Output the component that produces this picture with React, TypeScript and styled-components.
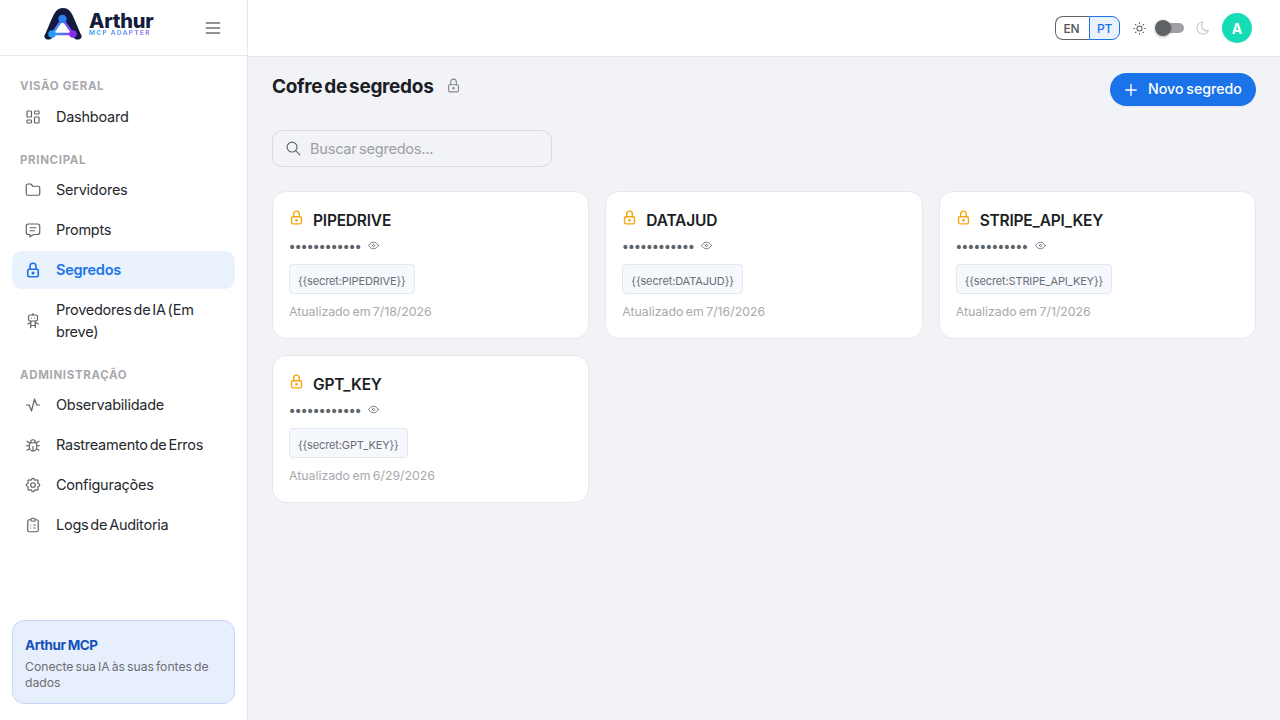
import React from "react";
import styled, { createGlobalStyle } from "styled-components";
import {
  TbLayoutDashboard, TbFolder, TbMessage, TbLock, TbRobot, TbActivity, TbBug,
  TbSettings, TbClipboardList, TbMenu2, TbSun, TbMoon, TbSearch, TbPlus, TbEye,
} from "react-icons/tb";

const Global = createGlobalStyle`
  html, body { margin: 0; padding: 0; height: 100%; }
  body { font-family: Inter, "Open Sans", sans-serif; background: #f1f3f6; color: #1d2129; overflow: hidden; }
  * { box-sizing: border-box; }
`;

const Shell = styled.div`
  display: grid;
  grid-template-columns: 248px 1fr;
  height: 720px;
`;
const Sidebar = styled.aside`
  display: flex;
  flex-direction: column;
  background: #fff;
  border-right: 1px solid #e6e8ec;
  height: 720px;
`;
const Brand = styled.div`
  display: flex;
  align-items: center;
  height: 56px;
  flex: none;
  padding: 0 24px 0 44px;
  border-bottom: 1px solid #e6e8ec;
  justify-content: space-between;
`;
const LogoWrap = styled.div`
  display: flex;
  align-items: center;
  gap: 7px;
  margin-top: -7px;
`;
const LogoText = styled.div`
  display: flex;
  flex-direction: column;
`;
const LogoName = styled.span`
  font-size: 20px;
  font-weight: 800;
  line-height: 16px;
  color: #141b3c;
  letter-spacing: -0.2px;
`;
const LogoSub = styled.span`
  font-size: 6.5px;
  font-weight: 700;
  line-height: 6px;
  margin-top: 1px;
  letter-spacing: 1.3px;
  background: linear-gradient(90deg, #38a4f5, #9a6cf5);
  -webkit-background-clip: text;
  background-clip: text;
  color: transparent;
`;
const MenuBtn = styled.span`
  display: flex;
  color: #6b6f76;
  font-size: 20px;
  svg { stroke-width: 1.75; }
`;
const Nav = styled.nav`
  display: flex;
  flex-direction: column;
  padding: 0 12px;
  flex: 1;
`;
const SectionLabel = styled.div<{ $first?: boolean }>`
  font-size: 11.5px;
  font-weight: 700;
  letter-spacing: 0.65px;
  color: #a8a9ad;
  text-transform: uppercase;
  line-height: 14px;
  padding-left: 8px;
  margin: ${(p) => (p.$first ? "23px 0 5px" : "15px 0 4px")};
`;
const NavItem = styled.div<{ $active?: boolean }>`
  display: flex;
  align-items: center;
  gap: 14px;
  min-height: 38px;
  padding: 8px 12px;
  margin-bottom: 2px;
  border-radius: 10px;
  font-size: 14.5px;
  line-height: 22px;
  font-weight: ${(p) => (p.$active ? 600 : 400)};
  letter-spacing: -0.25px;
  word-spacing: -1.9px;
  color: ${(p) => (p.$active ? "#1a73e8" : "#25282e")};
  background: ${(p) => (p.$active ? "#e9f2fd" : "transparent")};
`;
const NavIcon = styled.span<{ $active?: boolean }>`
  display: flex;
  flex: none;
  font-size: 18px;
  color: ${(p) => (p.$active ? "#1a73e8" : "#5f6368")};
  svg { stroke-width: ${(p) => (p.$active ? 2.2 : 1.6)}; }
`;
const Promo = styled.div`
  margin: 0 12px 16px;
  height: 84px;
  padding: 14px 12px;
  border: 1px solid #c6d7f8;
  border-radius: 12px;
  background: #e8effc;
`;
const PromoTitle = styled.div`
  font-size: 13.5px;
  font-weight: 700;
  line-height: 20px;
  letter-spacing: -0.45px;
  word-spacing: -0.5px;
  color: #1452b8;
`;
const PromoText = styled.div`
  font-size: 12.2px;
  line-height: 16px;
  margin-top: 4px;
  word-spacing: -1.4px;
  color: #6b6e75;
`;
const Main = styled.main`
  display: flex;
  flex-direction: column;
  min-width: 0;
`;
const Topbar = styled.header`
  display: flex;
  align-items: center;
  justify-content: flex-end;
  height: 57px;
  flex: none;
  padding: 0 28px 0 0;
  background: #fff;
  border-bottom: 1px solid #e6e8ec;
`;
const LangGroup = styled.div`
  display: flex;
  height: 24px;
`;
const LangBtn = styled.span<{ $active?: boolean }>`
  display: flex;
  align-items: center;
  justify-content: center;
  width: ${(p) => (p.$active ? "31px" : "34px")};
  font-size: 12px;
  font-weight: 500;
  letter-spacing: -0.2px;
  padding-right: ${(p) => (p.$active ? "0" : "2px")};
  color: ${(p) => (p.$active ? "#1a73e8" : "#4f5359")};
  background: ${(p) => (p.$active ? "#e9f2fd" : "#fff")};
  border: 1px solid ${(p) => (p.$active ? "#1a73e8" : "#5f6368")};
  border-right-width: ${(p) => (p.$active ? "1px" : "0")};
  border-radius: ${(p) => (p.$active ? "0 8px 8px 0" : "8px 0 0 8px")};
`;
const ThemeIcon = styled.span<{ $dim?: boolean }>`
  display: flex;
  font-size: ${(p) => (p.$dim ? "16px" : "15px")};
  color: ${(p) => (p.$dim ? "#c9cbce" : "#5f6368")};
  svg { stroke-width: 1.75; }
`;
const ThemeRow = styled.div`
  display: flex;
  align-items: center;
  margin-left: 12px;
`;
const Switch = styled.span`
  position: relative;
  display: block;
  width: 21px;
  height: 10px;
  margin: 0 11px 0 16px;
  border-radius: 5px;
  background: #a0a1a4;
`;
const Thumb = styled.span`
  position: absolute;
  left: -8px;
  top: -3px;
  width: 16px;
  height: 16px;
  border-radius: 50%;
  background: #5f6368;
  box-shadow: 0 1px 3px rgba(0,0,0,0.3);
`;
const Avatar = styled.span`
  display: flex;
  align-items: center;
  justify-content: center;
  width: 30px;
  height: 30px;
  margin-left: 11px;
  border-radius: 50%;
  background: #14dcb4;
  color: #fff;
  font-size: 14px;
  font-weight: 700;
`;
const Content = styled.div`
  padding: 16px 24px;
  display: flex;
  flex-direction: column;
`;
const PageHead = styled.div`
  display: flex;
  justify-content: space-between;
  align-items: flex-start;
  height: 33px;
`;
const TitleRow = styled.div`
  display: flex;
  align-items: center;
  gap: 12px;
  height: 26px;
`;
const Title = styled.h1`
  margin: 0;
  padding-top: 2px;
  font-size: 19px;
  font-weight: 700;
  line-height: 26px;
  letter-spacing: -0.3px;
  word-spacing: -2.2px;
  color: #1b1e24;
`;
const TitleIcon = styled.span`
  display: flex;
  font-size: 17px;
  margin-top: -1px;
  color: #85888e;
  svg { stroke-width: 1.6; }
`;
const NewBtn = styled.button`
  display: flex;
  align-items: center;
  gap: 8px;
  height: 33px;
  width: 146px;
  padding: 0 0 2px 12px;
  border: 0;
  border-radius: 17px;
  background: #1a73e8;
  color: #fff;
  font-family: inherit;
  font-size: 14.2px;
  font-weight: 500;
  white-space: nowrap;
  word-spacing: -1px;
  box-shadow: 0 1px 2px rgba(0,0,0,0.06);
  svg { stroke-width: 1.9; margin-top: 2px; }
`;
const SearchBox = styled.div`
  display: flex;
  align-items: center;
  gap: 8px;
  width: 280px;
  height: 37px;
  margin-top: 24px;
  padding: 0 12px;
  border: 1px solid #d8dadf;
  border-radius: 10px;
  font-size: 14.6px;
  letter-spacing: -0.25px;
  word-spacing: -1.4px;
  color: #9d9fa4;
`;
const SearchIcon = styled.span`
  display: flex;
  font-size: 17px;
  color: #5f6368;
  svg { stroke-width: 1.6; }
`;
const CardGrid = styled.div`
  display: grid;
  grid-template-columns: repeat(3, 1fr);
  gap: 16px;
  margin-top: 24px;
`;
const Card = styled.article`
  height: 148px;
  padding: 16px;
  background: #fff;
  border: 1px solid #e6e8ec;
  border-radius: 14px;
`;
const CardHead = styled.div`
  display: flex;
  align-items: flex-start;
  gap: 8px;
  height: 28px;
`;
const LockIcon = styled.span`
  display: flex;
  font-size: 17px;
  margin: 1px 0 0 -1px;
  color: #f5a70f;
  svg { stroke-width: 2; }
`;
const CardName = styled.div`
  font-size: 15.5px;
  font-weight: 600;
  line-height: 24px;
  margin-top: 1px;
  letter-spacing: -0.2px;
  color: #1b1e24;
`;
const MaskRow = styled.div`
  display: flex;
  align-items: center;
  gap: 6px;
  height: 22px;
`;
const Mask = styled.span`
  font-size: 14px;
  letter-spacing: -2.26px;
  color: #5f6368;
  font-family: "DejaVu Sans", sans-serif;
  line-height: 22px;
  margin: 0 1px 0 -1px;
`;
const EyeIcon = styled.span`
  display: flex;
  font-size: 13px;
  margin-top: -3px;
  color: #5f6368;
  svg { stroke-width: 1.5; }
`;
const Token = styled.span`
  display: inline-flex;
  align-items: flex-end;
  height: 30px;
  margin-top: 6px;
  padding: 0 8px 4px;
  border: 1px solid #e3e7ee;
  border-radius: 4px;
  background: #f5f8fc;
  font-size: 11px;
  letter-spacing: -0.13px;
  line-height: 15px;
  color: #6b6e75;
`;
const Updated = styled.div`
  margin-top: 9px;
  font-size: 12.3px;
  line-height: 18px;
  word-spacing: -1px;
  color: #a8a9ad;
`;

function Logo() {
  return (
    <svg width="38" height="32" viewBox="0 0 38 32" aria-hidden="true">
      <defs>
        <linearGradient id="lg" x1="0" y1="0" x2="1" y2="0">
          <stop offset="0" stopColor="#2f9df5" />
          <stop offset="1" stopColor="#8a3df0" />
        </linearGradient>
      </defs>
      <path d="M0.5 27.5 C4 21 7 11 11 4.5 C13 1.2 16 0 19 0 C22 0 25 1.2 27 4.5 C31 11 34 21 37.5 27.5 C38.5 31 34 32.5 31 31 C29 29.5 29 27 28 26 L10 26 C9 27 9 29.5 7 31 C4 32.5 -0.5 31 0.5 27.5Z" fill="#121a3f" />
      <path d="M18.5 11 L8 26 L29 26 Z" fill="#fff" stroke="url(#lg)" strokeWidth="2.4" strokeLinejoin="round" />
      <circle cx="18.5" cy="11" r="4.2" fill="#2d7ff0" />
      <circle cx="8" cy="26" r="3.8" fill="#2a9cf5" />
      <circle cx="29" cy="26" r="3.8" fill="#8a2cf0" />
    </svg>
  );
}

const secrets = [
  { name: "PIPEDRIVE", date: "7/18/2026" },
  { name: "DATAJUD", date: "7/16/2026" },
  { name: "STRIPE_API_KEY", date: "7/1/2026" },
  { name: "GPT_KEY", date: "6/29/2026" },
];

export default function App() {
  return (
    <Shell>
      <Global />
      <Sidebar>
        <Brand>
          <LogoWrap>
            <Logo />
            <LogoText>
              <LogoName>Arthur</LogoName>
              <LogoSub>MCP ADAPTER</LogoSub>
            </LogoText>
          </LogoWrap>
          <MenuBtn><TbMenu2 /></MenuBtn>
        </Brand>
        <Nav>
          <SectionLabel $first>Visão geral</SectionLabel>
          <NavItem><NavIcon><TbLayoutDashboard /></NavIcon>Dashboard</NavItem>
          <SectionLabel>Principal</SectionLabel>
          <NavItem><NavIcon><TbFolder /></NavIcon>Servidores</NavItem>
          <NavItem><NavIcon><TbMessage /></NavIcon>Prompts</NavItem>
          <NavItem $active><NavIcon $active><TbLock /></NavIcon>Segredos</NavItem>
          <NavItem><NavIcon><TbRobot /></NavIcon>Provedores de IA (Em breve)</NavItem>
          <SectionLabel>Administração</SectionLabel>
          <NavItem><NavIcon><TbActivity /></NavIcon>Observabilidade</NavItem>
          <NavItem><NavIcon><TbBug /></NavIcon>Rastreamento de Erros</NavItem>
          <NavItem><NavIcon><TbSettings /></NavIcon>Configurações</NavItem>
          <NavItem><NavIcon><TbClipboardList /></NavIcon>Logs de Auditoria</NavItem>
        </Nav>
        <Promo>
          <PromoTitle>Arthur MCP</PromoTitle>
          <PromoText>Conecte sua IA às suas fontes de dados</PromoText>
        </Promo>
      </Sidebar>
      <Main>
        <Topbar>
          <LangGroup>
            <LangBtn>EN</LangBtn>
            <LangBtn $active>PT</LangBtn>
          </LangGroup>
          <ThemeRow>
            <ThemeIcon><TbSun /></ThemeIcon>
            <Switch><Thumb /></Switch>
            <ThemeIcon $dim><TbMoon /></ThemeIcon>
          </ThemeRow>
          <Avatar>A</Avatar>
        </Topbar>
        <Content>
          <PageHead>
            <TitleRow>
              <Title>Cofre de segredos</Title>
              <TitleIcon><TbLock /></TitleIcon>
            </TitleRow>
            <NewBtn><TbPlus size={18} />Novo segredo</NewBtn>
          </PageHead>
          <SearchBox>
            <SearchIcon><TbSearch /></SearchIcon>
            Buscar segredos...
          </SearchBox>
          <CardGrid>
            {secrets.map((s) => (
              <Card key={s.name}>
                <CardHead>
                  <LockIcon><TbLock /></LockIcon>
                  <CardName>{s.name}</CardName>
                </CardHead>
                <MaskRow>
                  <Mask>••••••••••••</Mask>
                  <EyeIcon><TbEye /></EyeIcon>
                </MaskRow>
                <Token>{`{{secret:${s.name}}}`}</Token>
                <Updated>Atualizado em {s.date}</Updated>
              </Card>
            ))}
          </CardGrid>
        </Content>
      </Main>
    </Shell>
  );
}
